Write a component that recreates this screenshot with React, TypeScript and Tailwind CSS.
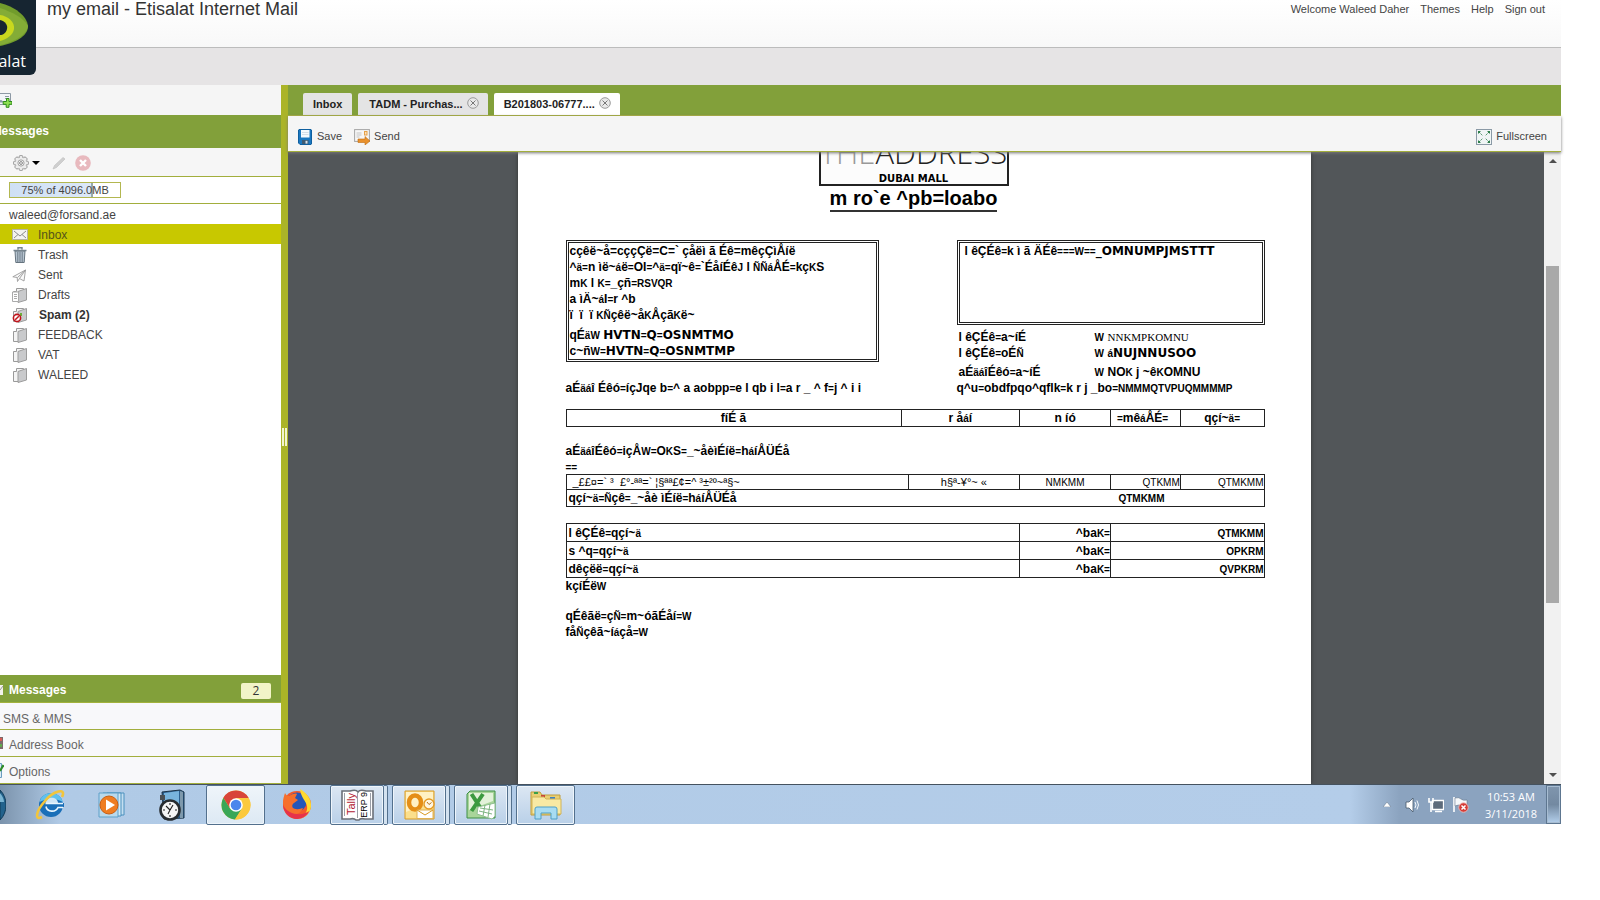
import React from "react";

const narrow = "text-[10px] leading-none";
const wide = "font-['DejaVu_Sans',sans-serif] leading-none";

function N({ children }: { children: React.ReactNode }) {
  return <span className={narrow}>{children}</span>;
}

function W({ children }: { children: React.ReactNode }) {
  return <span className={wide}>{children}</span>;
}

/* ---------- icons ---------- */

function FolderShape({ lines }: { lines?: boolean }) {
  return (
    <>
      <path d="M1.500 4.500h3v-3h7v3l-5 1v9h-5z" fill="#f4f4f4" stroke="#9a9a9a" />
      <path d="M6 4.500l8.500-3v11.500L6 15.500z" fill="#c9cacc" stroke="#9c9c9c" />
      {lines && <path d="M.5 5h6v9.500h-6zM2 7.500h3M2 9.500h3M2 11.500h3" fill="#fff" stroke="#aaa" />}
    </>
  );
}

function FolderIcon({ kind }: { kind: string }) {
  return (
    <svg viewBox="0 0 16 16" className="size-4 shrink-0" aria-hidden="true">
      {kind === "inbox" && (
        <>
          <rect x="0.500" y="2.500" width="15" height="10" fill="#f3f3f3" stroke="#b5b5a5" />
          <path d="M2 4l6 5 6-5M2 11l4-3.500M14 11l-4-3.500" fill="none" stroke="#8e8e8e" />
        </>
      )}
      {kind === "trash" && (
        <>
          <path d="M3 4h10l-.8 11.500H3.800z" fill="#b8c6d2" stroke="#66747f" />
          <path d="M5.800 5v10M8 5v10M10.200 5v10" stroke="#6d7b87" />
          <path d="M1.500 3.500h13M6 2.500V.8h4v1.700" fill="none" stroke="#75838d" strokeWidth="1.400" />
        </>
      )}
      {kind === "sent" && (
        <path d="M.8 9.800L13.500 3l-1.500 11-4.500-2.500-2 3-.3-4zM5.500 10.500l8-7.500-6 8.500" fill="#f9f9f9" stroke="#9b9b9b" strokeLinejoin="round" strokeWidth="0.900" />
      )}
      {kind === "drafts" && <FolderShape lines />}
      {kind === "folder" && <FolderShape />}
      {kind === "spam" && (
        <>
          <FolderShape />
          <rect x="8" y="6" width="2" height="3" fill="#6cae3a" />
          <circle cx="5" cy="11" r="3.600" fill="#fff" stroke="#c0141c" strokeWidth="1.600" />
          <path d="M3.200 12.800l3.600-3.600" stroke="#c0141c" strokeWidth="1.500" />
        </>
      )}
    </svg>
  );
}

function CloseIcon() {
  return (
    <svg viewBox="0 0 12 12" className="size-3" aria-hidden="true">
      <circle cx="6" cy="6" r="5.300" fill="#e9e9e9" stroke="#9a9a9a" />
      <path d="M3.500 3.500l5 5M8.500 3.500l-5 5" stroke="#777" />
    </svg>
  );
}

function GearIcon() {
  const teeth = [0, 45, 90, 135, 180, 225, 270, 315];
  return (
    <svg viewBox="0 0 16 16" className="size-4" aria-hidden="true">
      {teeth.map((a) => (
        <rect key={a} x="6.200" y="0.600" width="3.600" height="3.500" rx="1" fill="#eee" stroke="#8a8a8a" strokeWidth="0.900" transform={`rotate(${a} 8 8)`} />
      ))}
      <circle cx="8" cy="8" r="5.500" fill="#ececec" />
      <circle cx="8" cy="8" r="3.100" fill="#fff" stroke="#999" strokeWidth="0.900" />
      <circle cx="8" cy="8" r="1.500" fill="#ddd" stroke="#888" strokeWidth="0.900" />
    </svg>
  );
}

function AddContactIcon() {
  return (
    <svg viewBox="0 0 12 16" className="h-4 w-3" aria-hidden="true">
      <path d="M-4 1.500H10.500v11H-4z" fill="#f2f5f8" stroke="#8d99a5" />
      <path d="M-2 10c1-2 4-2 5 0zM5 4.500h4M5 6.500h4" fill="#7f93a8" stroke="#8d99a5" />
      <path d="M6.500 6.500h2.500v3h3v2.800H9v3H6.200v-3h-3V9.500h3.300z" fill="#8fe052" stroke="#2f8c1c" />
    </svg>
  );
}

function SaveIcon() {
  return (
    <svg viewBox="0 0 14 16" className="h-4 w-3.5" aria-hidden="true">
      <path d="M1 .5h12l.5.5v14l-.5.500H2L.5 14V1z" fill="#1c78c0" stroke="#0f5f9f" />
      <path d="M3 1h8.500v7.500H3z" fill="#f6fafd" />
      <path d="M4 3.500h6.500M4 5.500h6.500" stroke="#d5dfe8" />
      <path d="M4 11h6.500v4H4z" fill="#3f5b72" />
      <path d="M7.500 11.800h2v2.800h-2z" fill="#d8e2ea" />
    </svg>
  );
}

function SendIcon() {
  return (
    <svg viewBox="0 0 17 16" className="h-4 w-[17px]" aria-hidden="true">
      <rect x="0.600" y="0.600" width="14.800" height="11.800" fill="#f7f7f7" stroke="#a5a5a5" />
      <path d="M2.500 4h5M2.500 6h5M2.500 8h3" stroke="#c3c3c3" />
      <rect x="10.500" y="2.500" width="2.500" height="3.500" fill="#fbe0b8" stroke="#e6a048" />
      <path d="M4 10h7V7.500l5 4.500-5 4v-2.500H4z" fill="#e9912c" stroke="#c06d12" strokeWidth="0.600" />
    </svg>
  );
}

function FullscreenIcon() {
  return (
    <svg viewBox="0 0 16 16" className="size-4" aria-hidden="true">
      <rect x="0.500" y="0.500" width="15" height="15" fill="#f0f5f5" stroke="#8b9aa6" />
      <path d="M3 3l3.500 3.500M13 3L9.500 6.500M3 13l3.500-3.500M13 13L9.500 9.500" stroke="#2f7f4c" strokeDasharray="1.600 .7" />
      <path d="M2 2h3L2 5zM14 2h-3l3 3zM2 14h3l-3-3zM14 14h-3l3-3z" fill="#2f7f4c" />
    </svg>
  );
}

/* ---------- header ---------- */

function Header() {
  return (
    <header className="relative h-[85px] shrink-0 bg-[#e6e4e5]">
      <div className="flex h-12 items-start justify-between border-b border-[#bcbcbc] bg-linear-to-b from-white to-[#f8f8f8] pr-4 pl-[47px]">
        <h1 className="text-lg leading-[18px] text-[#333]">my email - Etisalat Internet Mail</h1>
        <nav className="flex gap-[11px] pt-[3px] text-[11px] leading-3 text-[#444]">
          <span>Welcome Waleed Daher</span>
          <a href="#themes">Themes</a>
          <a href="#help">Help</a>
          <a href="#signout">Sign out</a>
        </nav>
      </div>
      <div className="absolute top-0 left-0 flex h-[75px] w-9 flex-col overflow-hidden rounded-br-md bg-[#162531]">
        <svg viewBox="0 0 36 50" className="h-[50px] w-9 shrink-0" aria-hidden="true">
          <path d="M0 3C14 6 27 16 28 26c0 11-14 17-28 20z" fill="#719c2c" />
          <path d="M0 8c12 4 24 10 28 18-1 9-14 16-28 19z" fill="#84ac36" />
          <path d="M0 15c8 1 15 7 14 14-1 6-7 10-14 12z" fill="#c9d81e" />
          <path d="M0 20c5 1 8 5 7 9-1 4-4 6-7 6z" fill="#162531" />
        </svg>
        <div className="flex w-[26px] justify-end font-['Open_Sans',sans-serif] text-base leading-[22px] text-white">etisalat</div>
      </div>
    </header>
  );
}

/* ---------- sidebar ---------- */

const folders = [
  { name: "Trash", kind: "trash" },
  { name: "Sent", kind: "sent" },
  { name: "Drafts", kind: "drafts" },
  { name: "Spam (2)", kind: "spam" },
  { name: "FEEDBACK", kind: "folder" },
  { name: "VAT", kind: "folder" },
  { name: "WALEED", kind: "folder" },
];

function Sidebar() {
  return (
    <aside className="flex w-[281px] shrink-0 flex-col bg-white text-xs text-[#444]">
      <div className="flex h-[30px] items-center bg-[#f5f5f5]">
        <button aria-label="New contact">
          <AddContactIcon />
        </button>
      </div>
      <h2 className="flex h-[33px] items-center bg-[#82a03a] pb-0.5 font-bold text-white">
        <span className="flex w-[49px] justify-end overflow-hidden">Messages</span>
      </h2>
      <div className="flex h-[29px] items-center border-b border-[#a2ae3c] bg-[#f6f6f6] pt-0.5 pl-[13px]">
        <button className="flex items-center gap-[3px]" aria-label="Actions">
          <GearIcon />
          <svg viewBox="0 0 8 4" className="h-1 w-2" aria-hidden="true">
            <path d="M0 0h8L4 4z" fill="#000" />
          </svg>
        </button>
        <button className="ml-3" aria-label="Edit">
          <svg viewBox="0 0 14 14" className="size-3.5" aria-hidden="true">
            <path d="M1 13l1.500-3.500L11 1.500l2 1.500-8.500 8.500z" fill="#cfcfcf" stroke="#c2c2c2" strokeWidth="0.700" />
          </svg>
        </button>
        <button className="ml-[9px]" aria-label="Delete">
          <svg viewBox="0 0 16 16" className="size-4" aria-hidden="true">
            <circle cx="8" cy="8" r="7.800" fill="#e8b9be" />
            <path d="M5 5l6 6M11 5l-6 6" stroke="#fff" strokeWidth="2.400" />
          </svg>
        </button>
      </div>
      <div className="h-[27px] border-b border-[#a2ae3c] px-[9px] pt-[5px]">
        <div className="h-4 w-28 border border-[#b3b750] bg-[linear-gradient(90deg,#cfe0f5_0%,#dce8f8_74%,#9aa_74%,#9aa_75%,#fff_75%)] text-center text-[11px] leading-[14px] whitespace-nowrap text-[#444]">
          75% of 4096.0MB
        </div>
      </div>
      <p className="h-5 pl-[9px] leading-[23px]">waleed@forsand.ae</p>
      <ul className="flex-1">
        <li className="bg-[#c8c800]">
          <a href="#inbox" className="flex h-5 items-center gap-2.5 pt-0.5 pl-3 text-[#55551a]">
            <FolderIcon kind="inbox" />
            Inbox
          </a>
        </li>
        {folders.map((f) => (
          <li key={f.name}>
            <a href="#folder" className={f.kind === "spam" ? "flex h-5 items-center gap-[11px] pt-0.5 pl-3 font-bold text-[#333]" : "flex h-5 items-center gap-2.5 pt-0.5 pl-3"}>
              <FolderIcon kind={f.kind} />
              {f.name}
            </a>
          </li>
        ))}
      </ul>
      <nav className="shrink-0">
        <a href="#messages" className="flex h-7 items-center justify-between border-b border-[#a2b23c] bg-[#82a03a] pt-0.5 pr-2.5 font-bold text-white">
          <span className="flex items-center gap-1.5">
            <svg viewBox="0 0 3 12" className="h-3 w-[3px]" aria-hidden="true">
              <path d="M0 1h3v10H0z" fill="#f2f2ea" />
              <path d="M0 6l3-4" stroke="#999" />
            </svg>
            Messages
          </span>
          <span className="mt-0.5 w-[30px] rounded-xs bg-[#f2f4c8] text-center font-['Open_Sans',sans-serif] leading-4 font-normal text-[#333]">2</span>
        </a>
        <a href="#sms" className="flex h-[27px] items-center border-b border-[#a2ae3c] bg-[#f8f8fa] pt-1.5 pl-[3px] text-[#666]">SMS &amp; MMS</a>
        <a href="#address" className="flex h-[27px] items-center gap-1.5 border-b border-[#a2ae3c] bg-[#f8f8fa] text-[#666]">
          <svg viewBox="0 0 3 12" className="h-3 w-[3px]" aria-hidden="true">
            <path d="M0 0h3v12H0z" fill="#7b6a6a" />
            <path d="M0 1h2v3H0z" fill="#d85b55" />
            <path d="M0 7h2v3H0z" fill="#5fa84c" />
          </svg>
          <span className="pt-1">Address Book</span>
        </a>
        <a href="#options" className="flex h-[27px] items-center gap-[5px] border-b border-[#a2ae3c] bg-[#f8f8fa] text-[#666]">
          <svg viewBox="0 0 4 15" className="h-[15px] w-1" aria-hidden="true">
            <path d="M0 .5h1.500v14H0" fill="#dcebf5" stroke="#6a9cc0" />
            <path d="M0 8l3.500-6" stroke="#2f8c2a" strokeWidth="2.200" />
          </svg>
          <span className="pt-1">Options</span>
        </a>
      </nav>
    </aside>
  );
}

/* ---------- document ---------- */

const sellerLines: React.ReactNode[] = [
  <>cçêë~å=cççÇë=C=` çåëì ã Éê=mêçÇìÅíë</>,
  <>^<N>ä=</N>n ìë~<N>á</N>ë<N>=</N>OI<N>=</N>^<N>ä=</N>qï~ê<N>=</N>`ÉåíÉê<N>J</N> l <N>ÑÑá</N>ÅÉ<N>=</N>kç<N>K</N>S</>,
  <>m<N>K</N> l <N>K=</N>_çñ<N>=RSVQR</N></>,
  <>a ìÄ~<N>á</N>I<N>=</N>r ^b</>,
  <>ï&nbsp; ï&nbsp; ï <N>KÑ</N>çêë~å<N>K</N>Åçã<N>K</N>ë~</>,
];

const details: { label: React.ReactNode; value: React.ReactNode; style: string }[] = [
  { label: <>l êÇÉê<N>=</N>a~íÉ</>, value: <span className="font-['Liberation_Serif',serif] text-[11px] leading-none font-normal">NNKMPKOMNU</span>, style: "h-4" },
  { label: <>l êÇÉê<N>=</N>oÉ<N>Ñ</N></>, value: <><N>á</N><W>NUJNNUSOO</W></>, style: "h-[19px]" },
  { label: <>aÉ<N>äá</N>îÉêó<N>=</N>a~íÉ</>, value: <>NO<N>K</N> j ~ê<N>K</N>OMNU</>, style: "h-4" },
];

const totals = [
  { label: <>l êÇÉê<N>=</N>qçí~<N>ä</N></>, amount: "QTMKMM" },
  { label: <>s ^q<N>=</N>qçí~<N>ä</N></>, amount: "OPKRM" },
  { label: <>dêçëë<N>=</N>qçí~<N>ä</N></>, amount: "QVPKRM" },
];

function DocumentPage() {
  const cell = "border border-[#222] p-0";
  return (
    <article className="mx-auto min-h-full w-[793px] bg-white pr-[46px] pl-12 text-xs leading-4 font-bold whitespace-nowrap text-black shadow-[0_0_4px_#333]">
      <header className="flex flex-col items-center pr-[3px]">
        <div className="flex h-[34px] w-[190px] flex-col items-center justify-end overflow-hidden border-2 border-t-0 border-[#222] bg-[#fcfcfc]">
          <p className="shrink-0 font-['Open_Sans',sans-serif] text-[31px] leading-8 font-light text-[#222]">
            <span className="text-[#999]">THE</span>ADDRESS
          </p>
          <p className="shrink-0 pt-1.5 font-['DejaVu_Sans',sans-serif] text-[10px] leading-[10px]">DUBAI MALL</p>
        </div>
        <h2 className="border-b-2 border-[#333] text-xl leading-6">m ro`e ^pb=loabo</h2>
      </header>
      <div className="mt-7 flex items-start justify-between">
        <div>
          <div className="w-[313px] border-[3px] border-double border-[#222] pl-px">
            {sellerLines.map((l, i) => (
              <p key={i}>{l}</p>
            ))}
            <p className="mt-1">qÉ<N>äW</N> <W>HVTN</W><N>=</N><W>Q</W><N>=</N><W>OSNMTMO</W></p>
            <p>c~ñ<N>W=</N><W>HVTN</W><N>=</N><W>Q</W><N>=</N><W>OSNMTMP</W></p>
          </div>
          <p className="mt-[18px]">aÉ<N>äá</N>î Éêó<N>=</N>íçJqe b<N>=</N>^ a aobpp<N>=</N>e l qb i l<N>=</N>a r _ ^ f<N>=</N>j ^ i i</p>
        </div>
        <div className="w-[308px]">
          <div className="h-[85px] border-[3px] border-double border-[#222] pl-[5px]">
            l êÇÉê<N>=</N>k ì ã ÄÉê<N>===W==</N><W>_OMNUMPJMSTTT</W>
          </div>
          <dl className="mt-1 pl-0.5">
            {details.map((d, i) => (
              <div key={i} className={"grid grid-cols-[136px_13px_1fr] " + d.style}>
                <dt>{d.label}</dt>
                <dd><N>W</N></dd>
                <dd>{d.value}</dd>
              </div>
            ))}
          </dl>
          <p>q^u<N>=</N>obdfpqo^qflk<N>=</N>k r j _bo<N>=NMMMQTVPUQMMMMP</N></p>
        </div>
      </div>
      <table className="mt-[13px] w-full table-fixed border-collapse text-center">
        <thead>
          <tr className="h-[17px]">
            <th className={"w-[48%] " + cell}>fíÉ ã</th>
            <th className={"w-[17%] " + cell}>r å<N>á</N>í</th>
            <th className={"w-[13%] " + cell}>n íó</th>
            <th className="w-[10%] border border-[#222] p-0 pl-1.5 text-left"><N>=</N>mê<N>á</N>ÅÉ<N>=</N></th>
            <th className={"w-[12%] " + cell}>qçí~<N>ä=</N></th>
          </tr>
        </thead>
      </table>
      <p className="mt-4">aÉ<N>äá</N>îÉêó<N>=</N>içÅ<N>W=</N>O<N>K</N>S<N>=</N>_~åèìÉíë<N>=</N>h<N>á</N>íÅÜÉå</p>
      <p className="h-[15px]"><N>==</N></p>
      <table className="w-full table-fixed border-collapse">
        <tbody>
          <tr className="h-[15px] text-right text-[11px] leading-[14px] font-normal">
            <td className={"w-[49%] pl-1.5 text-left " + cell}>_££¤=` ³&nbsp; £°-ªª=` ¦§ªª£¢=^ ³±²º~ª§~</td>
            <td className={"w-[16%] text-center " + cell}>h§ª-¥°~ «</td>
            <td className={"w-[13%] text-center " + cell}><N>NMKMM</N></td>
            <td className={"w-[10%] " + cell}><N>QTKMM</N></td>
            <td className={"w-[12%] " + cell}><N>QTMKMM</N></td>
          </tr>
          <tr className="h-[17px]">
            <td colSpan={3} className="border border-r-0 border-[#222] p-0 pl-0.5">qçí~<N>ä=Ñ</N>çê<N>=</N>_~åè ìÉíë<N>=</N>h<N>á</N>íÅÜÉå</td>
            <td colSpan={2} className="border border-l-0 border-[#222] p-0 pl-2"><N>QTMKMM</N></td>
          </tr>
        </tbody>
      </table>
      <table className="mt-4 w-full table-fixed border-collapse">
        <tbody>
          {totals.map((t, i) => (
            <tr key={i} className="h-[18px]">
              <td className={"w-[65%] pl-0.5 " + cell}>{t.label}</td>
              <td className={"w-[13%] text-right " + cell}>^ba<N>K=</N></td>
              <td className={"w-[22%] text-right " + cell}><N>{t.amount}</N></td>
            </tr>
          ))}
        </tbody>
      </table>
      <p>kçíÉë<N>W</N></p>
      <p className="mt-3.5">qÉêãë<N>=</N>ç<N>Ñ=</N>m~óãÉåí<N>=W</N></p>
      <p>få<N>Ñ</N>çêã~í<N>á</N>çå<N>=W</N></p>
    </article>
  );
}

/* ---------- content pane ---------- */

function Content() {
  return (
    <main className="flex min-w-0 flex-1 flex-col">
      <div className="flex h-[31px] shrink-0 items-end gap-1.5 border-b border-[#a9b03c] bg-[#82a03a] pl-[15px] text-[11px] font-bold text-[#222]">
        <button className="h-[22px] rounded-t-xs bg-[#e4e4e4] px-2.5">Inbox</button>
        <div className="flex h-[22px] items-center gap-1 rounded-t-xs bg-[#e4e4e4] pr-[9px] pl-[11px]">
          <button>TADM - Purchas...</button>
          <button className="mb-0.5" aria-label="Close TADM - Purchas"><CloseIcon /></button>
        </div>
        <div className="flex h-[22px] items-center gap-1 rounded-t-xs bg-white pr-[9px] pl-2.5">
          <button>B201803-06777....</button>
          <button className="mb-0.5" aria-label="Close B201803-06777"><CloseIcon /></button>
        </div>
      </div>
      <div className="relative flex h-9 shrink-0 items-center gap-3 border-b border-[#a2ae3c] bg-[#f5f5f5] pt-1.5 pr-3.5 pl-2.5 text-[11px] text-[#444] shadow-[0_1px_3px_#777]">
        <button className="flex items-center gap-[5px]"><SaveIcon />Save</button>
        <button className="flex items-center gap-[3px]"><SendIcon />Send</button>
        <button className="ml-auto flex items-center gap-1"><FullscreenIcon />Fullscreen</button>
      </div>
      <div className="flex min-h-0 flex-1 bg-[#525659]">
        <div className="min-w-0 flex-1 overflow-hidden pr-1">
          <DocumentPage />
        </div>
        <div className="flex w-[17px] flex-col items-center justify-between bg-[#f1f1f1] py-[7px]">
          <svg viewBox="0 0 8 4" className="h-1 w-2" aria-hidden="true"><path d="M4 0l4 4H0z" fill="#505050" /></svg>
          <div className="mt-[103px] mb-auto h-[337px] w-[13px] bg-[#a9a9a9]" />
          <svg viewBox="0 0 8 4" className="h-1 w-2" aria-hidden="true"><path d="M0 0h8L4 4z" fill="#505050" /></svg>
        </div>
      </div>
    </main>
  );
}

/* ---------- taskbar ---------- */

function IeIcon() {
  return (
    <svg viewBox="0 0 32 32" className="size-8" aria-hidden="true">
      <circle cx="17" cy="17" r="12" fill="#1a6fb8" />
      <path d="M5.500 14C7 8 12 5 17 5s10 3 12 9c-7-4-16-4-23.500 0z" fill="#5fc1ee" />
      <path d="M11.500 15c1-7 12-7 12.500 0z" fill="#cfe6f6" />
      <path d="M11.500 19H30v-4H11.500z" fill="#1a6fb8" />
      <path d="M11.500 15.500H29M12 18.500c1 6 10 6 12 1h5" fill="none" stroke="#e9f6fd" strokeWidth="1.600" />
      <path d="M28 9c5-10-9-6-17 4C2 23 0 33 8 29" fill="none" stroke="#f2c53c" strokeWidth="2.600" />
    </svg>
  );
}

function PlayerIcon() {
  return (
    <svg viewBox="0 0 30 26" className="h-[26px] w-[30px]" aria-hidden="true">
      <path d="M9 1h17v22H9z" fill="#c4def0" stroke="#4a90bd" />
      <path d="M5 1h18v23H5z" fill="#d2e8f5" stroke="#4a90bd" />
      <path d="M1 1h19v24H1z" fill="#b9d9ec" stroke="#5fa0c8" />
      <circle cx="11" cy="13" r="9" fill="#ef7d22" stroke="#c95e13" />
      <path d="M8 7.500v11l9-5.500z" fill="#fff" />
    </svg>
  );
}

function ClockIcon() {
  return (
    <svg viewBox="0 0 28 32" className="h-8 w-7" aria-hidden="true">
      <path d="M4 3l18-2 4 2v26l-20 1z" fill="#2b5f8e" stroke="#1b3347" />
      <path d="M6 4l15-2v14H6z" fill="#78b4dd" />
      <path d="M22 2l3 1v26h-3z" fill="#7e99ac" />
      <circle cx="12" cy="21" r="9.500" fill="#f5f5f5" stroke="#272c30" strokeWidth="2.600" />
      <path d="M12 14v2M12 26v2M5 21h2M17 21h2M8 17l4 4 3-5M12 21l-2 4" fill="none" stroke="#222" strokeWidth="1.100" />
      <path d="M2 6h5v5H2z" fill="#4a4f54" />
    </svg>
  );
}

function ChromeIcon() {
  return (
    <svg viewBox="0 0 30 30" className="size-[30px]" aria-hidden="true">
      <circle cx="15" cy="15" r="14.500" fill="#fbc93d" />
      <path d="M2.400 7.800A14.500 14.500 0 0 0 14 29.500l7-11.200L15 15 9 18.300z" fill="#3aa757" />
      <path d="M2.400 7.800L9 18.300 15 8h12.600A14.500 14.500 0 0 0 2.400 7.800z" fill="#d8453a" />
      <path d="M27.600 8H15l6 10.500-7 11A14.500 14.500 0 0 0 27.600 8z" fill="#fbc93d" />
      <circle cx="15" cy="15" r="6.800" fill="#fff" />
      <circle cx="15" cy="15" r="5.300" fill="#4a86ec" />
    </svg>
  );
}

function FirefoxIcon() {
  return (
    <svg viewBox="0 0 32 32" className="size-8" aria-hidden="true">
      <circle cx="16" cy="17" r="14" fill="#f4582a" />
      <circle cx="16" cy="14" r="9.500" fill="#2456b8" />
      <path d="M19 1c5 3 12 9 11 18-1 7-7 12-14 12 7-2 11-7 10-13-1-5-6-8-7-17z" fill="#ffd92e" />
      <path d="M4 5c1 2 2 3 4 3 3-2 6-3 8-2l-2 4 3 2-4 3c-3 2-2 6 2 6 3 1 5-1 7-1-2 5-6 7-10 6C6 25 2 19 2 14c0-3 1-6 2-9z" fill="#f6702c" />
      <path d="M2 17c1 9 8 14 14 14 6 0 11-4 12-8-5 5-21 5-26-6z" fill="#e6324b" />
    </svg>
  );
}

function TallyIcon() {
  return (
    <span className="relative flex h-8 w-[33px] items-center justify-between px-1">
      <svg viewBox="0 0 33 32" className="absolute inset-0 h-8 w-[33px]" aria-hidden="true">
        <path d="M1 2h8q6-2 8 1 2-3 8-1h7v28h-8q-5-1-6 1h-3q-2-2-6-1H1z" fill="#fff" stroke="#6b7078" strokeWidth="1.600" />
        <path d="M3.500 4v23M29.500 4v23M16.500 4v25" stroke="#9b9fa7" />
      </svg>
      <span className="relative rotate-180 text-[11px] leading-3 text-[#b22234] [writing-mode:vertical-rl]">Tally</span>
      <span className="relative rotate-180 text-[9px] leading-3 text-black [writing-mode:vertical-rl]">ERP 9</span>
    </span>
  );
}

function OutlookIcon() {
  return (
    <svg viewBox="0 0 31 30" className="h-[30px] w-[31px]" aria-hidden="true">
      <path d="M1 1h29v28H1z" fill="#fbdf8c" stroke="#d89a24" />
      <path d="M2 2h27v9L2 22z" fill="#fff1c4" />
      <ellipse cx="11" cy="12.500" rx="6" ry="7" fill="none" stroke="#e58e16" strokeWidth="4.500" />
      <path d="M13 20h16v8.500H13z" fill="#fff" stroke="#e0b052" />
      <path d="M13 20l8 5 8-5" fill="none" stroke="#d89a24" />
      <circle cx="25" cy="14" r="5" fill="#fff6e0" stroke="#e59a24" strokeWidth="1.400" />
      <path d="M23 12l2 2.500 2.500-2" fill="none" stroke="#b4701a" />
    </svg>
  );
}

function ExcelIcon() {
  return (
    <svg viewBox="0 0 30 30" className="size-[30px]" aria-hidden="true">
      <path d="M4 1h25v27H1V4z" fill="#a9d59a" stroke="#3d8f45" />
      <path d="M3 3h24v8L3 20z" fill="#e3f2da" />
      <path d="M5.500 4l11 17M17 4L5.500 21" stroke="#3c9a40" strokeWidth="4" />
      <path d="M12 17l17-4v13l-3 3-15-5z" fill="#fff" stroke="#8fbf90" />
      <path d="M14 18l13 2M13 21l13 3M19 15l-2 11M24 14l-2 13" stroke="#7fb583" />
    </svg>
  );
}

function ExplorerIcon() {
  return (
    <svg viewBox="0 0 32 30" className="h-[30px] w-8" aria-hidden="true">
      <path d="M1 2h9l2 3h18v20H1z" fill="#e8cf74" stroke="#bf9d3c" />
      <path d="M4 2h4v2H4z" fill="#3aa04a" />
      <path d="M11 5h4v2h-4z" fill="#c9473a" />
      <path d="M20 7h5v2h-5z" fill="#3c82c4" />
      <path d="M2 7h12l2 2h15v15H2z" fill="#f8e9a3" stroke="#d2b456" />
      <path d="M5 29V19q0-2 2-2h18q2 0 2 2v10h-6v-6H11v6z" fill="#a8dcf2" stroke="#4e9fc6" />
    </svg>
  );
}

const taskButton = "flex h-10 items-center justify-center rounded-xs border border-[#53708d] shadow-[inset_0_0_0_1px_#eef5fb]";
const openTask = "bg-linear-to-b from-[#dce7f3] to-[#b9d0e8]";

function StackedButton({ label, children }: { label: string; children: React.ReactNode }) {
  return (
    <div className="flex w-[58px]">
      <button className={"w-[54px] " + openTask + " " + taskButton} aria-label={label}>{children}</button>
      <span className="h-10 w-1 rounded-r-xs border border-l-0 border-[#53708d] bg-[#d3e2f0]" />
    </div>
  );
}

function Taskbar() {
  return (
    <footer className="flex h-10 shrink-0 items-center border-t border-[#45525f] bg-[linear-gradient(90deg,#7b93ac_0px,#b0cae6_60px,#b4cde9_1350px,#8ba3bf_1400px)]">
      <button className="w-1.5 overflow-hidden" aria-label="Start">
        <svg viewBox="0 0 6 32" className="h-8 w-1.5" aria-hidden="true">
          <path d="M0 1q6 6 6 15T0 31z" fill="#22628c" stroke="#0f3a57" />
          <path d="M0 4q4 5 4 9H0z" fill="#79b4d2" />
        </svg>
      </button>
      <button className="ml-7 pb-0.5" aria-label="Internet Explorer"><IeIcon /></button>
      <button className="ml-8" aria-label="Media Player"><PlayerIcon /></button>
      <button className="ml-[30px]" aria-label="Clock"><ClockIcon /></button>
      <button className={"ml-5 w-[59px] bg-linear-to-b from-[#eff5fa] to-[#dde9f4] " + taskButton} aria-label="Chrome"><ChromeIcon /></button>
      <button className="mx-4 pb-0.5" aria-label="Firefox"><FirefoxIcon /></button>
      <div className="ml-px flex gap-1">
        <StackedButton label="Tally ERP 9"><TallyIcon /></StackedButton>
        <StackedButton label="Outlook"><OutlookIcon /></StackedButton>
        <StackedButton label="Excel"><ExcelIcon /></StackedButton>
        <button className={"w-[59px] " + openTask + " " + taskButton} aria-label="Explorer"><ExplorerIcon /></button>
      </div>
      <div className="ml-auto flex items-center">
        <svg viewBox="0 0 8 5" className="h-[5px] w-2" aria-hidden="true"><path d="M4 0l4 5H0z" fill="#fff" stroke="#5c7086" strokeWidth="0.500" /></svg>
        <svg viewBox="0 0 14 16" className="ml-[14px] h-4 w-[14px]" aria-hidden="true">
          <path d="M1 5h3l4-4v14l-4-4H1z" fill="#fff" stroke="#47586b" strokeWidth="0.800" />
          <path d="M10 5q2 3 0 6M12 3.500q3 4.500 0 9" fill="none" stroke="#f4f8fb" />
        </svg>
        <svg viewBox="0 0 16 16" className="ml-[9px] size-4" aria-hidden="true">
          <path d="M4.500 3.500h11v9h-11z" fill="#5d6b7b" stroke="#fff" strokeWidth="1.300" />
          <path d="M7 14.500h7" stroke="#fff" strokeWidth="1.500" />
          <path d="M1 1v4h4V1M3 5v10" fill="none" stroke="#fff" strokeWidth="1.600" />
        </svg>
        <svg viewBox="0 0 17 17" className="ml-2 size-[17px]" aria-hidden="true">
          <path d="M2 1v15" stroke="#fff" strokeWidth="1.600" />
          <path d="M3 2q4-1 6 1t6 1v7q-4 1-6-1t-6 0z" fill="#f5f8fb" stroke="#5a6a7c" strokeWidth="0.500" />
          <circle cx="11.500" cy="11.500" r="4.700" fill="#d43b36" stroke="#f3c2bf" strokeWidth="0.800" />
          <path d="M9.500 9.500l4 4M13.500 9.500l-4 4" stroke="#fff" strokeWidth="1.500" />
        </svg>
        <div className="ml-3 w-[60px] text-center font-['Open_Sans',sans-serif] text-[11px] leading-[17px] whitespace-nowrap text-white">
          <p>10:53 AM</p>
          <p>3/11/2018</p>
        </div>
        <button className="ml-[5px] h-[39px] w-[15px] border border-[#5d7690] bg-linear-to-b from-[#8096ae] via-[#7389a1] to-[#b4d0ec] shadow-[inset_0_0_0_1px_#a8bdd2]" aria-label="Show desktop" />
      </div>
    </footer>
  );
}

export default function App() {
  return (
    <div className="h-screen overflow-hidden bg-white pr-[39px] pb-[76px] font-['Liberation_Sans',Arial,sans-serif]">
      <div className="flex h-full flex-col">
        <Header />
        <div className="flex min-h-0 flex-1">
          <Sidebar />
          <div className="flex w-[7px] shrink-0 items-center justify-center bg-[#abb428] pt-1">
            <div className="h-[18px] w-[5px] border-x-2 border-[#f3f4d0]" />
          </div>
          <Content />
        </div>
        <Taskbar />
      </div>
    </div>
  );
}
